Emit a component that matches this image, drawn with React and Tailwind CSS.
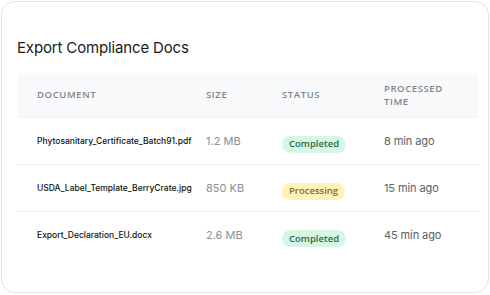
import React from 'react';

const docs = [
  { name: 'Phytosanitary_Certificate_Batch91.pdf', size: '1.2 MB', status: 'Completed', time: '8 min ago' },
  { name: 'USDA_Label_Template_BerryCrate.jpg', size: '850 KB', status: 'Processing', time: '15 min ago' },
  { name: 'Export_Declaration_EU.docx', size: '2.6 MB', status: 'Completed', time: '45 min ago' },
];

const StatusBadge = ({ status }) => {
  const done = status === 'Completed';
  return (
    <span
      className={`inline-flex items-center h-[17px] px-[7px] rounded-full text-[9.5px] font-semibold font-['Open_Sans',sans-serif] ${
        done ? 'bg-[#d7f7e4] text-[#1f6b45]' : 'bg-[#fdf3b8] text-[#8a6a14]'
      }`}
    >
      {status}
    </span>
  );
};

const App = () => {
  return (
    <div className="w-[490px] h-[295px] bg-white p-px">
      <div className="w-[488px] h-[292px] border border-[#e2e4e7] rounded-[14px] bg-white pl-[15px] pr-[9px] pt-[36px] font-['Inter',sans-serif]">
        <h1 className="text-[15px] leading-[20px] font-normal text-[#1a1a1a] tracking-[-0.15px]">Export Compliance Docs</h1>

        {/* Table */}
        <div className="mt-[15px]">
          <div className="grid grid-cols-[189px_76px_102px_1fr] items-center h-[45px] bg-[#f8f9fb] border-b border-[#eef0f2] text-[9.5px] tracking-[0.6px] text-[#80858c] font-['Open_Sans',sans-serif] font-semibold">
            <div className="pl-5">DOCUMENT</div>
            <div>SIZE</div>
            <div>STATUS</div>
            <div className="leading-[13px]">
              PROCESSED
              <br />
              TIME
            </div>
          </div>

          {docs.map((doc, i) => (
            <div
              key={doc.name}
              className={`grid grid-cols-[189px_76px_102px_1fr] items-center h-[47px] ${
                i < docs.length - 1 ? 'border-b border-[#eef0f2]' : ''
              }`}
            >
              <div className="pl-5 text-[8.5px] font-medium text-[#111]">{doc.name}</div>
              <div className="text-[11px] text-[#8a8f96]">{doc.size}</div>
              <div>
                <StatusBadge status={doc.status} />
              </div>
              <div className="text-[11px] tracking-[-0.1px] text-[#5b6068]">{doc.time}</div>
            </div>
          ))}
        </div>
      </div>
    </div>
  );
};

export default App;
